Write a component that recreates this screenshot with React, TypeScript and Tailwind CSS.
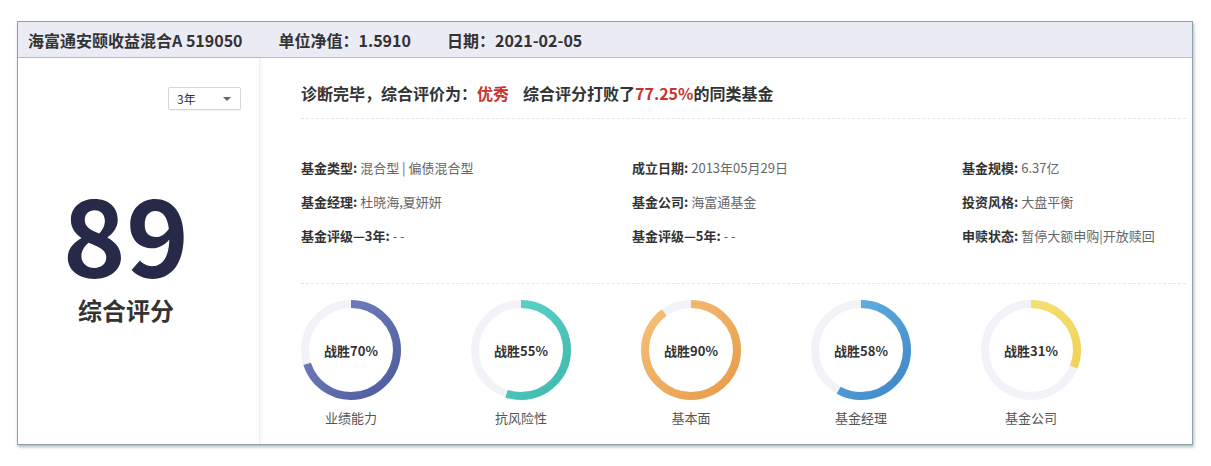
import React from "react";

const FONT = { fontFamily: '"Noto Sans CJK SC", "Noto Sans", sans-serif' };

type Donut = { pct: number; label: string; c1: string; c2: string; id: string };

const donuts: Donut[] = [
  { pct: 70, label: "业绩能力", c1: "#7a86c4", c2: "#4b5b9c", id: "g1" },
  { pct: 55, label: "抗风险性", c1: "#62d8cc", c2: "#3fb8ae", id: "g2" },
  { pct: 90, label: "基本面", c1: "#f4c27a", c2: "#e89a48", id: "g3" },
  { pct: 58, label: "基金经理", c1: "#6ab8e6", c2: "#3d86c6", id: "g4" },
  { pct: 31, label: "基金公司", c1: "#f7e47c", c2: "#f0d050", id: "g5" },
];

function Ring({ d }: { d: Donut }) {
  const r = 46;
  const c = 2 * Math.PI * r;
  return (
    <div className="flex w-[100px] flex-col items-center">
      <div className="relative h-[100px] w-[100px]">
        <svg width="100" height="100" viewBox="0 0 100 100">
          <defs>
            <linearGradient id={d.id} x1="1" y1="0" x2="0" y2="1">
              <stop offset="0" stopColor={d.c1} />
              <stop offset="1" stopColor={d.c2} />
            </linearGradient>
          </defs>
          <circle cx="50" cy="50" r={r} fill="none" stroke="#f1f3f9" strokeWidth="8" />
          <circle
            cx="50"
            cy="50"
            r={r}
            fill="none"
            stroke={`url(#${d.id})`}
            strokeWidth="8"
            strokeDasharray={`${c} ${c}`}
            strokeDashoffset={c * (1 - d.pct / 100)}
            transform="rotate(-90 50 50)"
          />
        </svg>
        <div className="absolute inset-0 flex items-center justify-center text-[13px] font-bold leading-none text-[#333]">
          战胜{d.pct}%
        </div>
      </div>
      <div className="mt-[9px] text-[13px] leading-[18px] text-[#555]">{d.label}</div>
    </div>
  );
}

function Info({ label, value }: { label: string; value: string }) {
  return (
    <div className="h-[34px] text-[13px] leading-[34px]">
      <span className="font-bold text-[#333]">{label}: </span>
      <span className="text-[#666]">{value}</span>
    </div>
  );
}

export default function App() {
  return (
    <div className="h-[466px] w-full bg-white pl-[17px] pt-[21px]" style={FONT}>
      <div className="flex h-[424px] w-[1176px] flex-col border border-[#8ea2aa] bg-white shadow-[1px_2px_3px_rgba(80,100,110,0.45)]">
        <div className="flex h-[36px] items-center gap-[36px] border-b border-[#b9bdca] bg-[#ebebf6] pl-[10px] text-[16px] font-bold text-[#333]">
          <span>海富通安颐收益混合A 519050</span>
          <span>单位净值：1.5910</span>
          <span>日期：2021-02-05</span>
        </div>
        <div className="flex flex-1">
          <div className="w-[242px] border-r border-[#eeeeee] shadow-[2px_0_3px_rgba(0,0,0,0.03)]">
            <div className="flex justify-end pr-[18px] pt-[29px]">
              <div className="flex h-[23px] w-[73px] items-center justify-between rounded-[2px] border border-[#d6d6d6] bg-white pl-[8px] pr-[9px] text-[12px] text-[#333] shadow-[0_1px_1px_rgba(0,0,0,0.05)]">
                <span>3年</span>
                <span className="h-0 w-0 border-x-[4px] border-t-[4px] border-x-transparent border-t-[#666]" />
              </div>
            </div>
            <div className="flex w-[216px] flex-col items-center pt-[67px]">
              <div className="text-[107px] font-bold leading-[110px] text-[#262a48]">89</div>
              <div className="mt-[8px] text-[24px] font-bold leading-[30px] text-[#333]">综合评分</div>
            </div>
          </div>
          <div className="flex-1 pl-[41px] pr-[6px]">
            <div className="pt-[24px] text-[16px] font-bold leading-[22px] text-[#333]">
              诊断完毕，综合评价为：<span className="text-[#c8332f]">优秀</span>
              <span className="ml-[14px]">综合评分打败了</span>
              <span className="text-[#c8332f]">77.25%</span>的同类基金
            </div>
            <div className="mt-[14px] border-t border-dashed border-[#e6e6e6]" />
            <div className="grid grid-cols-[331px_330px_1fr] pt-[32px]">
              <Info label="基金类型" value="混合型 | 偏债混合型" />
              <Info label="成立日期" value="2013年05月29日" />
              <Info label="基金规模" value="6.37亿" />
              <Info label="基金经理" value="杜晓海,夏妍妍" />
              <Info label="基金公司" value="海富通基金" />
              <Info label="投资风格" value="大盘平衡" />
              <Info label="基金评级—3年" value="- -" />
              <Info label="基金评级—5年" value="- -" />
              <Info label="申赎状态" value="暂停大额申购|开放赎回" />
            </div>
            <div className="mt-[30px] border-t border-dashed border-[#e6e6e6]" />
            <div className="flex gap-[70px] pt-[16px]">
              {donuts.map((d) => (
                <Ring key={d.id} d={d} />
              ))}
            </div>
          </div>
        </div>
      </div>
    </div>
  );
}
